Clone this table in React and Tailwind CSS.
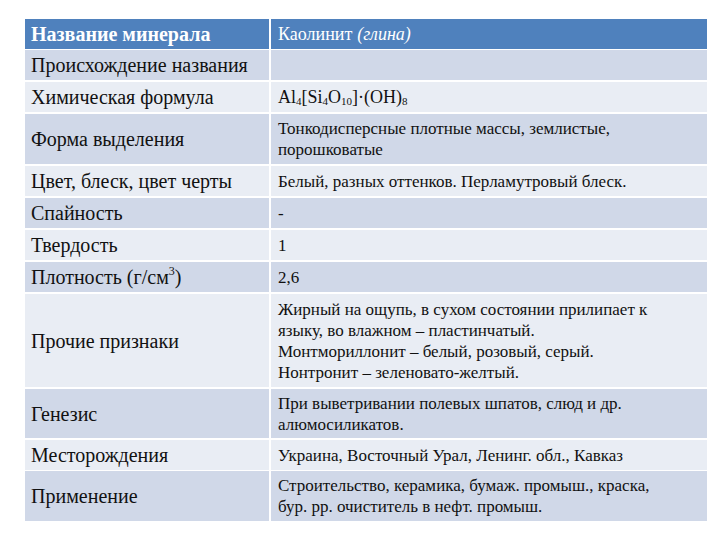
export default function App() {
  const rows = [
    { label: 'Происхождение названия', h: 'h-[30px]', bg: 'bg-[#d0d8e8]', value: null },
    {
      label: 'Химическая формула',
      h: 'h-[30px]',
      bg: 'bg-[#e9edf4]',
      value: (
        <span className="text-[18px]">
          Al<sub className="text-[11px]">4</sub>[Si<sub className="text-[11px]">4</sub>O
          <sub className="text-[11px]">10</sub>]·(OH)<sub className="text-[11px]">8</sub>
        </span>
      ),
    },
    {
      label: 'Форма выделения',
      h: 'h-[50px]',
      bg: 'bg-[#d0d8e8]',
      value: 'Тонкодисперсные плотные массы, землистые, порошковатые',
    },
    {
      label: 'Цвет, блеск, цвет черты',
      h: 'h-[30px]',
      bg: 'bg-[#e9edf4]',
      value: 'Белый, разных оттенков. Перламутровый блеск.',
    },
    { label: 'Спайность', h: 'h-[30px]', bg: 'bg-[#d0d8e8]', value: '-' },
    { label: 'Твердость', h: 'h-[30px]', bg: 'bg-[#e9edf4]', value: '1' },
    {
      label: (
        <>
          Плотность (г/см<sup className="text-[12px]">3</sup>)
        </>
      ),
      h: 'h-[30px]',
      bg: 'bg-[#d0d8e8]',
      value: '2,6',
    },
    {
      label: 'Прочие признаки',
      h: 'h-[93px]',
      bg: 'bg-[#e9edf4]',
      value: (
        <>
          Жирный на ощупь, в сухом состоянии прилипает к языку, во влажном – пластинчатый.
          <br />
          Монтмориллонит – белый, розовый, серый.
          <br />
          Нонтронит – зеленовато-желтый.
        </>
      ),
    },
    {
      label: 'Генезис',
      h: 'h-[49px]',
      bg: 'bg-[#d0d8e8]',
      value: 'При выветривании полевых шпатов, слюд и др. алюмосиликатов.',
    },
    {
      label: 'Месторождения',
      h: 'h-[29px]',
      bg: 'bg-[#e9edf4]',
      value: 'Украина, Восточный Урал, Ленинг. обл., Кавказ',
    },
    {
      label: 'Применение',
      h: 'h-[50px]',
      bg: 'bg-[#d0d8e8]',
      value: 'Строительство, керамика, бумаж. промыш., краска, бур. рр. очиститель в нефт. промыш.',
    },
  ];

  return (
    <div className="w-[720px] h-[540px] bg-white pt-[19px] pl-[25px] font-['Liberation_Serif',serif] text-[#111]">
      <div className="w-[682px] flex flex-col gap-[2px] bg-white">
        {/* шапка */}
        <div className="grid grid-cols-[244px_1fr] gap-[2px] h-[29px]">
          <div className="bg-[#4f81bd] flex items-center pl-[6px] text-white font-bold text-[20px]">
            Название минерала
          </div>
          <div className="bg-[#4f81bd] flex items-center pl-[7px] text-white text-[18px]">
            Каолинит <i className="ml-[5px]">(глина)</i>
          </div>
        </div>

        {rows.map((r, i) => (
          <div key={i} className={`grid grid-cols-[244px_1fr] gap-[2px] ${r.h}`}>
            <div className={`${r.bg} flex items-center pl-[6px] text-[20px]`}>{r.label}</div>
            <div className={`${r.bg} flex items-center pl-[7px] pr-[25px] text-[17px] leading-[21px]`}>
              <div>{r.value}</div>
            </div>
          </div>
        ))}
      </div>
    </div>
  );
}
